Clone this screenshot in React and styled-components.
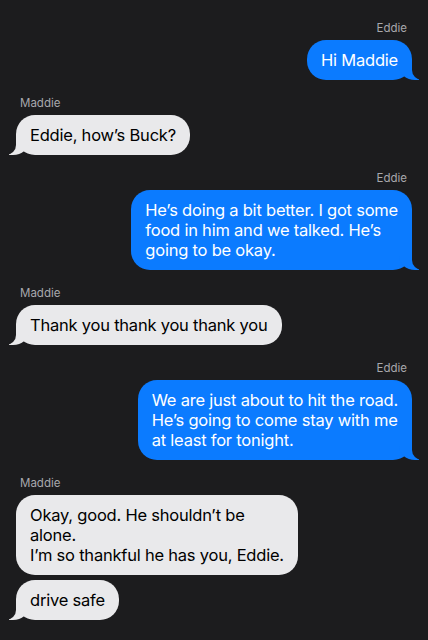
import React from "react";
import styled, { createGlobalStyle, css } from "styled-components";

const Global = createGlobalStyle`
  html, body { margin: 0; padding: 0; background: #1c1c1e; }
  body { font-family: Inter, "Noto Sans", sans-serif; -webkit-font-smoothing: antialiased; }
`;

const BG = "#1c1c1e";
const BLUE = "#0b7bff";
const GRAY = "#e9e9eb";

const Thread = styled.div`
  width: 428px;
  height: 640px;
  box-sizing: border-box;
  padding: 21px 16px 0 16px;
  display: flex;
  flex-direction: column;
  overflow: hidden;
  background: ${BG};
`;

const Group = styled.div`
  display: flex;
  flex-direction: column;
  align-items: ${(p) => (p.$me ? "flex-end" : "flex-start")};
  gap: 5px;
  & + & { margin-top: 16px; }
`;

const Sender = styled.div`
  font-size: 11.5px;
  line-height: 14px;
  color: #a8a8ad;
  margin: 0 ${(p) => (p.$me ? "5px" : "0")} 0 ${(p) => (p.$me ? "0" : "4px")};
`;

const Bubble = styled.div`
  position: relative;
  box-sizing: border-box;
  white-space: nowrap;
  padding: 10px 14px;
  border-radius: 19px;
  font-size: 16.5px;
  line-height: 20px;
  letter-spacing: -0.22px;
  background: ${(p) => (p.$me ? BLUE : GRAY)};
  color: ${(p) => (p.$me ? "#fff" : "#000")};
  ${(p) =>
    p.$tail &&
    (p.$me
      ? css`
          &::before {
            content: "";
            position: absolute;
            bottom: 0;
            right: -7px;
            width: 20px;
            height: 20px;
            background: ${BLUE};
            border-bottom-left-radius: 16px 14px;
          }
          &::after {
            content: "";
            position: absolute;
            bottom: 0;
            right: -26px;
            width: 26px;
            height: 20px;
            background: ${BG};
            border-bottom-left-radius: 10px;
          }
        `
      : css`
          &::before {
            content: "";
            position: absolute;
            bottom: 0;
            left: -7px;
            width: 20px;
            height: 20px;
            background: ${GRAY};
            border-bottom-right-radius: 16px 14px;
          }
          &::after {
            content: "";
            position: absolute;
            bottom: 0;
            left: -26px;
            width: 26px;
            height: 20px;
            background: ${BG};
            border-bottom-right-radius: 10px;
          }
        `)}
`;

const Text = styled.span`
  position: relative;
  z-index: 1;
`;

const groups = [
  { me: true, name: "Eddie", msgs: [["Hi Maddie"]] },
  { me: false, name: "Maddie", msgs: [["Eddie, how\u2019s Buck?"]] },
  {
    me: true,
    name: "Eddie",
    msgs: [
      [
        "He\u2019s doing a bit better. I got some",
        "food in him and we talked. He\u2019s",
        "going to be okay.",
      ],
    ],
  },
  { me: false, name: "Maddie", msgs: [["Thank you thank you thank you"]] },
  {
    me: true,
    name: "Eddie",
    msgs: [
      [
        "We are just about to hit the road.",
        "He\u2019s going to come stay with me",
        "at least for tonight.",
      ],
    ],
  },
  {
    me: false,
    name: "Maddie",
    msgs: [
      ["Okay, good. He shouldn\u2019t be", "alone.", "I\u2019m so thankful he has you, Eddie."],
      ["drive safe"],
    ],
  },
];

export default function App() {
  return (
    <>
      <Global />
      <Thread>
        {groups.map((g, gi) => (
          <Group key={gi} $me={g.me}>
            <Sender $me={g.me}>{g.name}</Sender>
            {g.msgs.map((lines, mi) => (
              <Bubble key={mi} $me={g.me} $tail={mi === g.msgs.length - 1}>
                <Text>
                  {lines.map((l, li) => (
                    <React.Fragment key={li}>
                      {li > 0 && <br />}
                      {l}
                    </React.Fragment>
                  ))}
                </Text>
              </Bubble>
            ))}
          </Group>
        ))}
      </Thread>
    </>
  );
}
